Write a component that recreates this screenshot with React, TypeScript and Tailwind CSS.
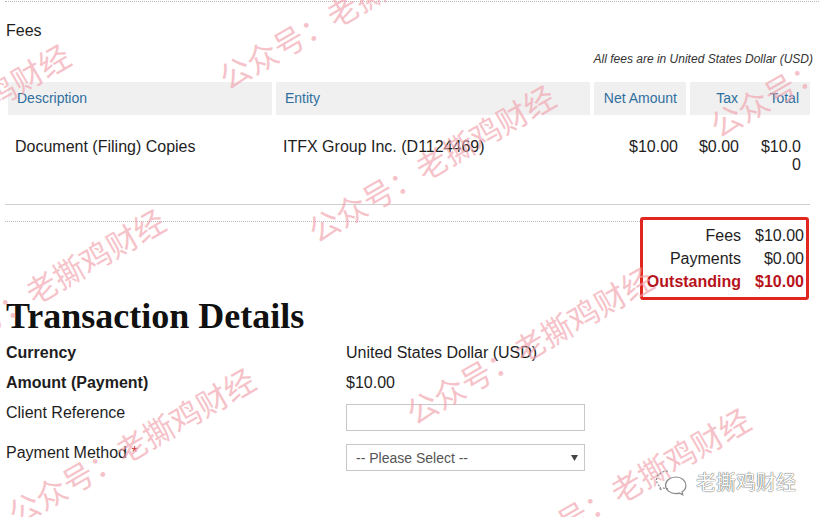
import React from 'react';

const watermarks = [
  'left-[221px] top-[79px]',
  'left-[310px] top-[232px]',
  'left-[712px] top-[127px]',
  'left-[-175px] top-[191px]',
  'left-[-80px] top-[356px]',
  'left-[408px] top-[414px]',
  'left-[10px] top-[515px]',
  'left-[505px] top-[555px]',
];

const WeChatBubbles: React.FC = () => (
  <svg width="36" height="28" viewBox="0 0 36 28" fill="none" stroke="#8a8a8a" strokeWidth="1.2">
    <path d="M14 3C7.5 3 2.5 7 2.5 12c0 2.8 1.6 5.2 4 6.8L5.5 22l3.8-2c1.4.4 3 .7 4.7.7" strokeDasharray="2 1.5" />
    <path d="M22 9c-6 0-10.5 3.8-10.5 8.3S16 25.6 22 25.6c1.3 0 2.5-.2 3.6-.5l3.2 1.7-.8-2.8c2.3-1.5 3.9-3.7 3.9-6.5C31.9 12.8 27.6 9 22 9z" />
  </svg>
);

export default function App() {
  return (
    <div className="relative w-[819px] h-[517px] overflow-hidden bg-white text-[#1e1e1e] font-['Liberation_Sans',Arial,sans-serif]">
      {/* top separator */}
      <div className="pt-[1px] pl-[5px]">
        <div className="border-t border-dotted border-[#b9b9b9]" />
      </div>

      <h3 className="mt-[20px] pl-[6px] text-[16px] leading-[18px]">Fees</h3>
      <p className="mt-[12px] pr-[6px] text-right text-[12px] leading-[14px] italic text-[#333]">
        All fees are in United States Dollar (USD)
      </p>

      {/* fees table */}
      <div className="mt-[16px] ml-[5px] w-[805px]">
        <div className="flex gap-[4px] pl-[3px] h-[33px] text-[14px] text-[#2f6f9f]">
          <div className="w-[264px] bg-[#f0f0f0] flex items-center pl-[9px]">Description</div>
          <div className="w-[314px] bg-[#f0f0f0] flex items-center pl-[9px]">Entity</div>
          <div className="w-[92px] bg-[#f0f0f0] flex items-center justify-end pr-[9px]">Net Amount</div>
          <div className="w-[120px] bg-[#f0f0f0] flex items-center">
            <div className="w-[57px] text-right pr-[9px]">Tax</div>
            <div className="w-[63px] text-right pr-[11px]">Total</div>
          </div>
        </div>
        <div className="flex gap-[4px] pl-[3px] pt-[23px] pb-[30px] text-[16px] leading-[18px] border-b border-[#cfcfcf]">
          <div className="w-[264px] pl-[7px]">Document (Filing) Copies</div>
          <div className="w-[314px] pl-[7px]">ITFX Group Inc. (D1124469)</div>
          <div className="w-[92px] text-right pr-[8px]">$10.00</div>
          <div className="w-[120px] flex">
            <div className="w-[57px] text-right pr-[8px]">$0.00</div>
            <div className="w-[63px] text-right pl-[10px] pr-[9px] break-all">$10.00</div>
          </div>
        </div>
      </div>

      {/* summary */}
      <div className="mt-[12px] flex items-start">
        <div className="flex-1 ml-[5px] mt-[4px] border-t border-dotted border-[#b9b9b9]" />
        <div className="mr-[10px] border-[3px] border-[#e1251f] rounded-[3px] pl-[4px] pr-[2px] pt-[4px] pb-[4px]">
          <div className="grid grid-cols-[auto_auto] gap-x-[14px] text-right text-[16px] leading-[23px]">
            <span>Fees</span>
            <span>$10.00</span>
            <span>Payments</span>
            <span>$0.00</span>
            <span className="font-bold text-[#b8121b]">Outstanding</span>
            <span className="font-bold text-[#b8121b]">$10.00</span>
          </div>
        </div>
      </div>

      <h2 className="pt-[1px] pl-[6px] text-[36px] leading-[30px] font-bold text-[#111] font-['Liberation_Serif',Georgia,serif]">
        Transaction Details
      </h2>

      {/* form */}
      <div className="mt-[13px] pl-[6px] grid grid-cols-[340px_239px] gap-y-[12px] text-[16px] leading-[18px]">
        <div className="font-bold">Currency</div>
        <div>United States Dollar (USD)</div>
        <div className="font-bold">Amount (Payment)</div>
        <div>$10.00</div>
        <div>Client Reference</div>
        <input type="text" className="mb-[1px] h-[27px] w-[239px] border border-[#c8c8c8] bg-white outline-none" />
        <div>
          Payment Method <span className="text-[#c9393e]">*</span>
        </div>
        <div className="relative h-[27px] w-[239px]">
          <select className="appearance-none w-full h-full border border-[#c8c8c8] bg-white pl-[9px] text-[14px] text-[#555] outline-none">
            <option>-- Please Select --</option>
          </select>
          <svg className="absolute right-[7px] top-[11px] pointer-events-none" width="7" height="6" viewBox="0 0 7 6">
            <path d="M0 0h7L3.5 6z" fill="#444" />
          </svg>
        </div>
      </div>

      {/* watermark overlay */}
      <div className="absolute inset-0 pointer-events-none">
        {watermarks.map((pos, i) => (
          <span
            key={i}
            className={`absolute ${pos} origin-left -translate-y-1/2 -rotate-[30deg] whitespace-nowrap text-[31px] leading-none text-[#f2a3ad] opacity-65 font-['Noto_Sans_CJK_SC',sans-serif]`}
          >
            公众号：老撕鸡财经
          </span>
        ))}
        <div className="absolute left-[654px] top-[468px] flex items-center gap-[6px]">
          <WeChatBubbles />
          <span className="text-[20px] leading-none text-white [text-shadow:0_0_1px_#555,0_0_1px_#555] font-['Noto_Sans_CJK_SC',sans-serif]">
            老撕鸡财经
          </span>
        </div>
      </div>
    </div>
  );
}
